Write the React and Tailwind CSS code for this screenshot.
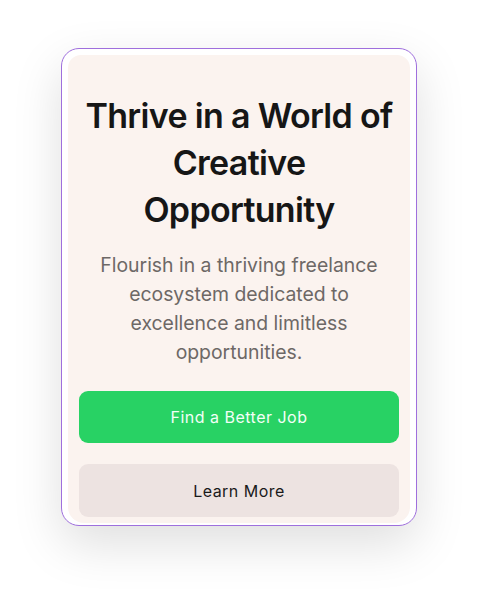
const App = () => {
  return (
    <div
      className="min-h-screen w-full bg-white flex justify-center pt-[48px]"
      style={{ fontFamily: "Inter, 'Noto Sans', sans-serif" }}
    >
      <div className="w-[356px] h-[478px] rounded-[18px] border-[1.5px] border-[#9f6fdd] bg-white pt-[6px] px-[6px] pb-[2px] shadow-[0_18px_50px_rgba(0,0,0,0.13)]">
        <div className="h-full rounded-t-[13px] rounded-b-[16px] bg-[#fbf3ef] px-[11px] flex flex-col">
          <h1 className="mt-[37px] text-center text-[34px] leading-[47px] font-semibold text-[#161616] tracking-[-0.02em]">
            Thrive in a World of Creative Opportunity
          </h1>
          <p className="mt-[18px] px-[10px] text-center text-[19.4px] leading-[29px] text-[#6d6866]">
            Flourish in a thriving freelance ecosystem dedicated to excellence and limitless opportunities.
          </p>
          <button className="mt-[24px] h-[52px] w-full rounded-[9px] bg-[#28d264] text-[16px] font-normal tracking-[0.03em] text-[#f2fff6]">
            Find a Better Job
          </button>
          <button className="mt-[21px] h-[53px] w-full rounded-[9px] bg-[#ede3e1] text-[16px] font-normal tracking-[0.03em] text-[#1a1a1a]">
            Learn More
          </button>
        </div>
      </div>
    </div>
  );
};

export default App;
